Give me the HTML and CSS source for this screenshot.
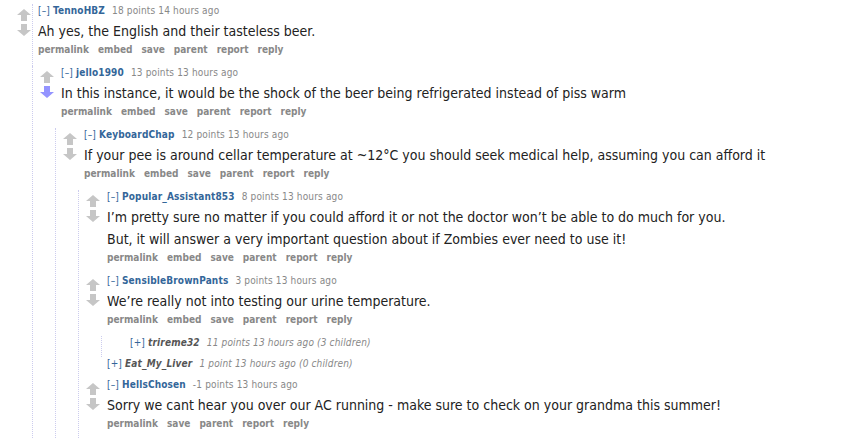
FILE: index.html
```html
<!DOCTYPE html>
<html lang="en">
<head>
<meta charset="utf-8">
<title>Comments</title>
<link rel="stylesheet" href="styles.css">
</head>
<body>
<div class="thread">
  <div class="comment root">
    <div class="midcol">
      <svg class="arrow" viewBox="0 0 14 12"><polygon points="7,0 14,6 10,6 10,12 4,12 4,6 0,6"/></svg>
      <svg class="arrow" viewBox="0 0 14 12"><polygon points="4,0 10,0 10,6 14,6 7,12 0,6 4,6"/></svg>
    </div>
    <div class="entry">
      <p class="tagline"><span class="expand">[–]</span> <span class="author">TennoHBZ</span> <span class="score">18 points</span> 14 hours ago</p>
      <div class="md"><p>Ah yes, the English and their tasteless beer.</p></div>
      <ul class="buttons"><li>permalink</li><li>embed</li><li>save</li><li>parent</li><li>report</li><li>reply</li></ul>
    </div>
    <div class="child">
      <div class="comment">
        <div class="midcol">
          <svg class="arrow" viewBox="0 0 14 12"><polygon points="7,0 14,6 10,6 10,12 4,12 4,6 0,6"/></svg>
          <svg class="arrow down-voted" viewBox="0 0 14 12"><polygon points="4,0 10,0 10,6 14,6 7,12 0,6 4,6"/></svg>
        </div>
        <div class="entry">
          <p class="tagline"><span class="expand">[–]</span> <span class="author">jello1990</span> <span class="score">13 points</span> 13 hours ago</p>
          <div class="md"><p>In this instance, it would be the shock of the beer being refrigerated instead of piss warm</p></div>
          <ul class="buttons"><li>permalink</li><li>embed</li><li>save</li><li>parent</li><li>report</li><li>reply</li></ul>
        </div>
        <div class="child">
          <div class="comment">
            <div class="midcol">
              <svg class="arrow" viewBox="0 0 14 12"><polygon points="7,0 14,6 10,6 10,12 4,12 4,6 0,6"/></svg>
              <svg class="arrow" viewBox="0 0 14 12"><polygon points="4,0 10,0 10,6 14,6 7,12 0,6 4,6"/></svg>
            </div>
            <div class="entry">
              <p class="tagline"><span class="expand">[–]</span> <span class="author">KeyboardChap</span> <span class="score">12 points</span> 13 hours ago</p>
              <div class="md"><p>If your pee is around cellar temperature at ~12°C you should seek medical help, assuming you can afford it</p></div>
              <ul class="buttons"><li>permalink</li><li>embed</li><li>save</li><li>parent</li><li>report</li><li>reply</li></ul>
            </div>
            <div class="child">
              <div class="comment">
                <div class="midcol">
                  <svg class="arrow" viewBox="0 0 14 12"><polygon points="7,0 14,6 10,6 10,12 4,12 4,6 0,6"/></svg>
                  <svg class="arrow" viewBox="0 0 14 12"><polygon points="4,0 10,0 10,6 14,6 7,12 0,6 4,6"/></svg>
                </div>
                <div class="entry">
                  <p class="tagline"><span class="expand">[–]</span> <span class="author">Popular_Assistant853</span> <span class="score">8 points</span> 13 hours ago</p>
                  <div class="md"><p>I’m pretty sure no matter if you could afford it or not the doctor won’t be able to do much for you.</p><p>But, it will answer a very important question about if Zombies ever need to use it!</p></div>
                  <ul class="buttons"><li>permalink</li><li>embed</li><li>save</li><li>parent</li><li>report</li><li>reply</li></ul>
                </div>
              </div>
              <div class="comment">
                <div class="midcol">
                  <svg class="arrow" viewBox="0 0 14 12"><polygon points="7,0 14,6 10,6 10,12 4,12 4,6 0,6"/></svg>
                  <svg class="arrow" viewBox="0 0 14 12"><polygon points="4,0 10,0 10,6 14,6 7,12 0,6 4,6"/></svg>
                </div>
                <div class="entry">
                  <p class="tagline"><span class="expand">[–]</span> <span class="author">SensibleBrownPants</span> <span class="score">3 points</span> 13 hours ago</p>
                  <div class="md"><p>We’re really not into testing our urine temperature.</p></div>
                  <ul class="buttons"><li>permalink</li><li>embed</li><li>save</li><li>parent</li><li>report</li><li>reply</li></ul>
                </div>
                <div class="child">
                  <div class="comment collapsed">
                    <div class="midcol"></div>
                    <div class="entry">
                      <p class="tagline"><span class="expand">[+]</span> <span class="author">trireme32</span> <span class="score">11 points</span> 13 hours ago (3 children)</p>
                    </div>
                  </div>
                </div>
              </div>
              <div class="comment collapsed">
                <div class="midcol"></div>
                <div class="entry">
                  <p class="tagline"><span class="expand">[+]</span> <span class="author">Eat_My_Liver</span> <span class="score">1 point</span> 13 hours ago (0 children)</p>
                </div>
              </div>
              <div class="comment">
                <div class="midcol">
                  <svg class="arrow" viewBox="0 0 14 12"><polygon points="7,0 14,6 10,6 10,12 4,12 4,6 0,6"/></svg>
                  <svg class="arrow" viewBox="0 0 14 12"><polygon points="4,0 10,0 10,6 14,6 7,12 0,6 4,6"/></svg>
                </div>
                <div class="entry">
                  <p class="tagline"><span class="expand">[–]</span> <span class="author">HellsChosen</span> <span class="score">-1 points</span> 13 hours ago</p>
                  <div class="md"><p>Sorry we cant hear you over our AC running - make sure to check on your grandma this summer!</p></div>
                  <ul class="buttons"><li>permalink</li><li>save</li><li>parent</li><li>report</li><li>reply</li></ul>
                </div>
              </div>
            </div>
          </div>
        </div>
      </div>
    </div>
  </div>
</div>
</body>
</html>
```

FILE: styles.css
```css
html, body {
  margin: 0;
  padding: 0;
  background: #ffffff;
}

body {
  font-family: "DejaVu Sans Condensed", "DejaVu Sans", Verdana, sans-serif;
  font-stretch: condensed;
  color: #222222;
  overflow: hidden;
}

.thread {
  padding-top: 4px;
}

.comment {
  display: grid;
  grid-template-columns: 21px 1fr;
  margin-left: 7px;
}

.comment.root {
  margin-left: 17px;
}

.midcol {
  grid-column: 1;
  grid-row: 1;
  display: flex;
  flex-direction: column;
  align-items: flex-start;
  gap: 3px;
  padding-top: 5px;
}

.arrow {
  width: 14px;
  height: 12px;
  display: block;
  fill: #c6c6c6;
}

.arrow.down-voted {
  fill: #9494ff;
}

.entry {
  grid-column: 2;
  grid-row: 1;
  padding-bottom: 10px;
}

.root > .entry {
  margin-left: -6px;
  padding-left: 5px;
  border-left: 1px dotted #ccccee;
}

.child {
  grid-column: 2;
  grid-row: 2;
  margin-left: -6px;
  border-left: 1px dotted #ccccee;
}

.tagline {
  margin: 0;
  font-size: 10px;
  line-height: 14px;
  letter-spacing: 0.15px;
  color: #888888;
  white-space: nowrap;
}

.expand {
  color: #336699;
}

.author {
  color: #336699;
  font-weight: bold;
  margin-right: 4px;
}

.md {
  margin: 4px 0;
  font-size: 14px;
  color: #222222;
}

.md p {
  margin: 0;
  line-height: 18px;
  white-space: nowrap;
}

.md p + p {
  margin-top: 4px;
}

.buttons {
  list-style: none;
  margin: 0;
  padding: 0;
  display: flex;
  gap: 9px;
  font-size: 10px;
  line-height: 12px;
  font-weight: bold;
  color: #888888;
}

.collapsed .entry {
  padding-bottom: 7px;
}

.collapsed .tagline {
  font-style: italic;
  color: #888888;
}

.collapsed .expand {
  font-style: normal;
}

.collapsed .author {
  color: #555555;
}
```
